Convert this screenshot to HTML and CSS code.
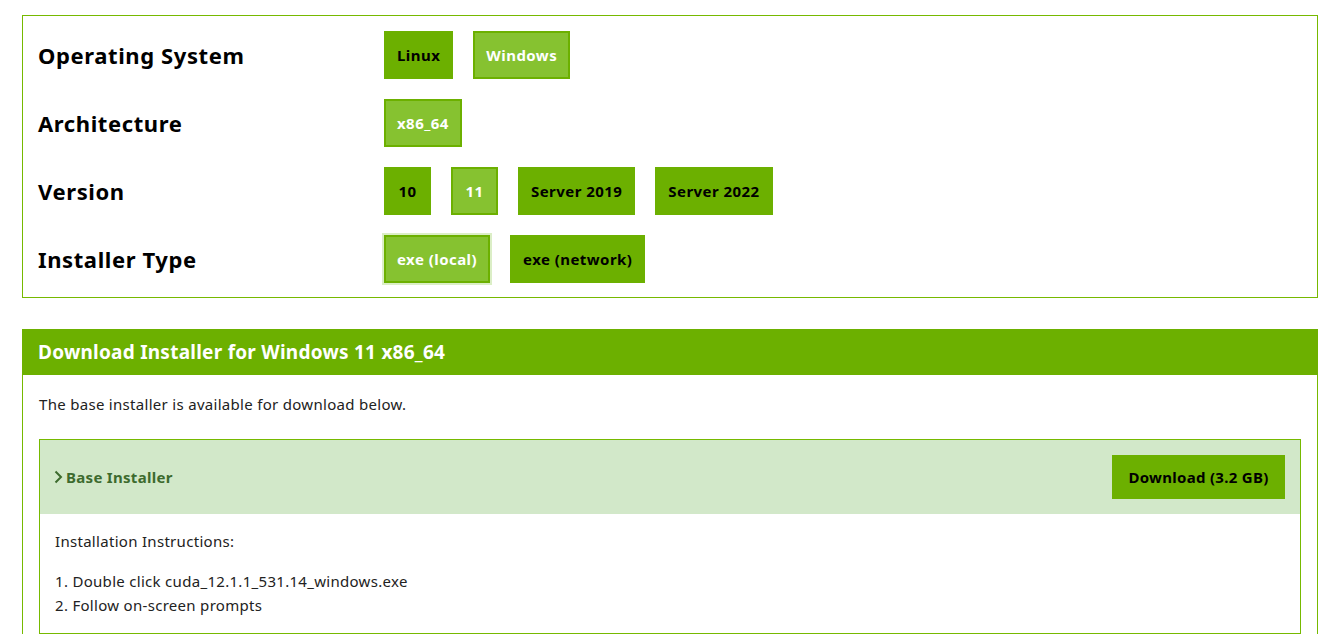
FILE: index.html
```html
<!DOCTYPE html>
<html>
<head>
<meta charset="utf-8">
<link rel="stylesheet" href="styles.css">
</head>
<body>
<div class="page">
  <div class="selector">
    <div class="label">Operating System</div>
    <div class="opts">
      <span class="btn">Linux</span>
      <span class="btn sel">Windows</span>
    </div>
    <div class="label">Architecture</div>
    <div class="opts">
      <span class="btn sel">x86_64</span>
    </div>
    <div class="label">Version</div>
    <div class="opts">
      <span class="btn">10</span>
      <span class="btn sel">11</span>
      <span class="btn">Server 2019</span>
      <span class="btn">Server 2022</span>
    </div>
    <div class="label">Installer Type</div>
    <div class="opts">
      <span class="btn sel focus">exe (local)</span>
      <span class="btn">exe (network)</span>
    </div>
  </div>

  <div class="download">
    <div class="dl-head">Download Installer for Windows 11 x86_64</div>
    <div class="dl-body">
      <p class="intro">The base installer is available for download below.</p>
      <div class="inst">
        <div class="inst-head">
          <div class="inst-title">
            <svg class="chev" width="9" height="14" viewBox="0 0 9 14"><path d="M1.5 1.5 L7 7 L1.5 12.5" fill="none" stroke="#3d6b2e" stroke-width="2"/></svg>
            <span>Base Installer</span>
          </div>
          <span class="dl-btn">Download (3.2 GB)</span>
        </div>
        <div class="inst-body">
          <p class="inst-label">Installation Instructions:</p>
          <ol class="steps">
            <li>Double click cuda_12.1.1_531.14_windows.exe</li>
            <li>Follow on-screen prompts</li>
          </ol>
        </div>
      </div>
    </div>
  </div>
</div>
</body>
</html>
```

FILE: styles.css
```css
* { box-sizing: border-box; }
html, body { margin: 0; padding: 0; background: #fff; }
body {
  font-family: "Noto Sans", "Open Sans", sans-serif;
  color: #1a1a1a;
  overflow: hidden;
}
.page {
  padding: 15px 0 0 22px;
  width: 1318px;
}
.selector {
  border: 1px solid #76b900;
  display: grid;
  grid-template-columns: 346px 1fr;
  row-gap: 20px;
  padding: 15px 15px 14px 15px;
  align-items: center;
}
.label {
  font-size: 22px;
  font-weight: 700;
  color: #000;
  line-height: 28px;
  letter-spacing: 0.6px;
}
.opts {
  display: flex;
  gap: 20px;
}
.btn {
  height: 48px;
  display: inline-flex;
  align-items: center;
  justify-content: center;
  padding: 0 11px;
  background: #6cb000;
  border: 2px solid #6cb000;
  color: #000;
  font-size: 15px;
  font-weight: 700;
  letter-spacing: 0.45px;
  min-width: 47px;
}
.btn.sel {
  background: #86c230;
  color: #fff;
}
.btn.focus {
  box-shadow: 0 0 0 2px #dbeec6;
}
.download {
  margin-top: 31px;
}
.dl-head {
  background: #6cb000;
  color: #fff;
  font-size: 19px;
  font-weight: 700;
  letter-spacing: 0.25px;
  height: 46px;
  display: flex;
  align-items: center;
  padding-left: 16px;
}
.dl-body {
  border-left: 1px solid #76b900;
  border-right: 1px solid #76b900;
  padding: 17px 16px 0 16px;
}
.intro {
  margin: 0 0 23px 0;
  font-size: 15px;
  line-height: 24px;
  letter-spacing: 0.3px;
  color: #222;
}
.inst {
  border: 1px solid #76b900;
}
.inst-head {
  background: #d2e8c9;
  display: flex;
  align-items: center;
  justify-content: space-between;
  padding: 15px 15px 15px 14px;
}
.inst-title {
  display: flex;
  align-items: center;
  gap: 3px;
  color: #3d6b2e;
  font-size: 15px;
  font-weight: 700;
  letter-spacing: 0.3px;
}
.chev { display: block; }
.dl-btn {
  background: #6cb000;
  color: #000;
  font-size: 15px;
  font-weight: 700;
  letter-spacing: 0.3px;
  height: 44px;
  width: 173px;
  display: flex;
  align-items: center;
  justify-content: center;
}
.inst-body {
  padding: 15px 15px 16px 15px;
  font-size: 15px;
  line-height: 24px;
  letter-spacing: 0.3px;
  color: #222;
}
.inst-label {
  margin: 0 0 16px 0;
}
.steps {
  margin: 0;
  padding: 0;
  list-style-position: inside;
}
```
